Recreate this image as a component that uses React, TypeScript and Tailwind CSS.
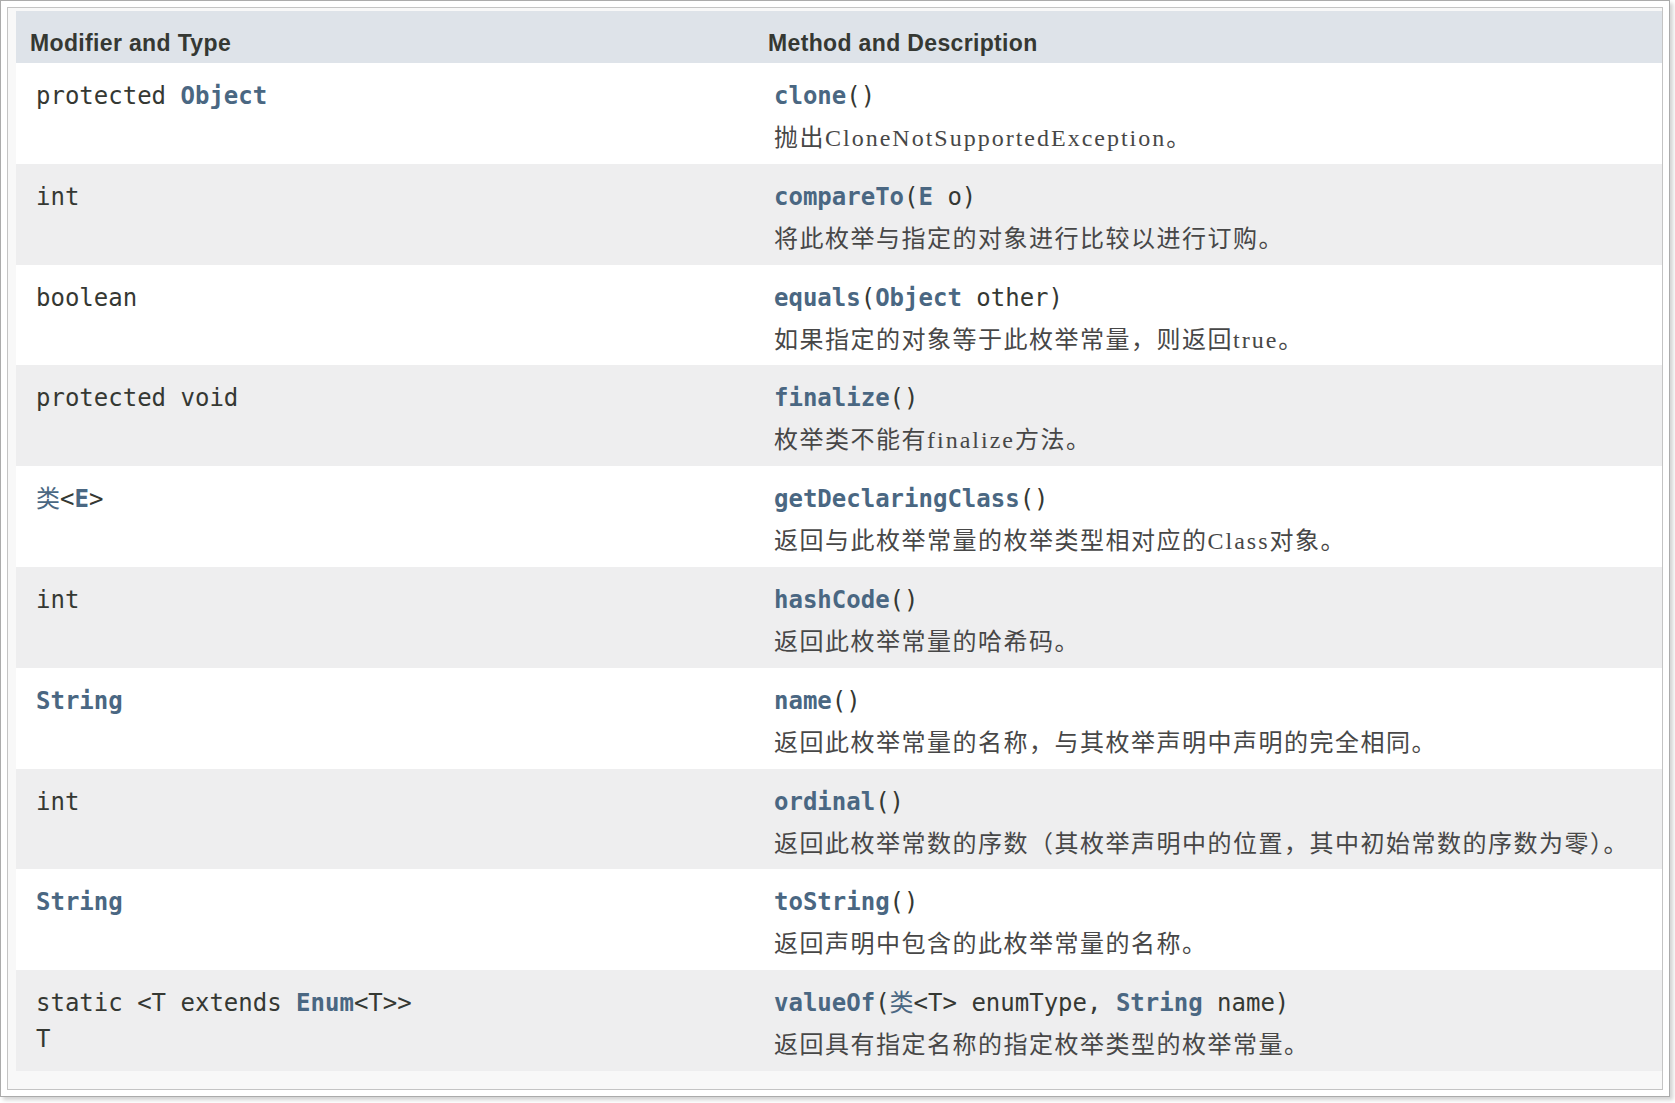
import type { ReactNode } from 'react';

const mono = "font-['DejaVu_Sans_Mono','Noto_Sans_CJK_SC',monospace]";

function L({ children, cjk }: { children: ReactNode; cjk?: boolean }) {
  return <span className={cjk ? 'text-[#4a6782]' : 'font-bold text-[#4a6782]'}>{children}</span>;
}

// latin runs in the description are set a little wider than the cjk text
function Desc({ text }: { text: string }) {
  return (
    <>
      {text.split(/([A-Za-z]+)/).map((part, i) =>
        i % 2 === 1 ? (
          <span key={i} className="tracking-[2px]">
            {part}
          </span>
        ) : (
          part
        )
      )}
    </>
  );
}

interface Row {
  type: ReactNode;
  method: ReactNode;
  desc: string;
}

const rows: Row[] = [
  {
    type: <>protected <L>Object</L></>,
    method: <><L>clone</L>()</>,
    desc: '抛出CloneNotSupportedException。',
  },
  {
    type: 'int',
    method: <><L>compareTo</L>(<L>E</L> o)</>,
    desc: '将此枚举与指定的对象进行比较以进行订购。',
  },
  {
    type: 'boolean',
    method: <><L>equals</L>(<L>Object</L> other)</>,
    desc: '如果指定的对象等于此枚举常量，则返回true。',
  },
  {
    type: 'protected void',
    method: <><L>finalize</L>()</>,
    desc: '枚举类不能有finalize方法。',
  },
  {
    type: <><L cjk>类</L>&lt;<L>E</L>&gt;</>,
    method: <><L>getDeclaringClass</L>()</>,
    desc: '返回与此枚举常量的枚举类型相对应的Class对象。',
  },
  {
    type: 'int',
    method: <><L>hashCode</L>()</>,
    desc: '返回此枚举常量的哈希码。',
  },
  {
    type: <L>String</L>,
    method: <><L>name</L>()</>,
    desc: '返回此枚举常量的名称，与其枚举声明中声明的完全相同。',
  },
  {
    type: 'int',
    method: <><L>ordinal</L>()</>,
    desc: '返回此枚举常数的序数（其枚举声明中的位置，其中初始常数的序数为零）。',
  },
  {
    type: <L>String</L>,
    method: <><L>toString</L>()</>,
    desc: '返回声明中包含的此枚举常量的名称。',
  },
  {
    type: <>static &lt;T extends <L>Enum</L>&lt;T&gt;&gt;<br />T</>,
    method: <><L>valueOf</L>(<L cjk>类</L>&lt;T&gt; enumType, <L>String</L> name)</>,
    desc: '返回具有指定名称的指定枚举类型的枚举常量。',
  },
];

export default function App() {
  return (
    <div className="min-h-screen bg-white">
      <div className="w-[1670px] border border-[#ababab] bg-white p-[6px] shadow-[3px_3px_4px_rgba(0,0,0,0.18)]">
        <div className="border border-[#c4c4c4] bg-[#f8f8f8] pl-2 pt-[3px] pb-[18px]">
          <div className="w-full">
            <div className="flex h-[52px] bg-[#dee3e9] font-['Liberation_Sans',Arial,sans-serif] text-[23px] font-bold leading-[27px] tracking-[0.35px] text-[#353833]">
              <div className="w-[738px] pl-[14px] pt-[19px]">Modifier and Type</div>
              <div className="flex-1 pl-[14px] pt-[19px]">Method and Description</div>
            </div>
            {rows.map((r, i) => (
              <div
                key={i}
                className={`flex h-[100.8px] ${i % 2 === 0 ? 'bg-white' : 'bg-[#eeeeef]'}`}
              >
                <div className={`w-[738px] pl-5 pt-[15px] ${mono} text-[24px] leading-[36px] text-[#353833]`}>
                  {r.type}
                </div>
                <div className="flex-1 pl-5 pt-[15px]">
                  <div className={`${mono} text-[24px] leading-[36px] text-[#353833]`}>{r.method}</div>
                  <div className="mt-[6px] font-['Liberation_Serif','Noto_Sans_CJK_SC',serif] text-[24px] leading-[36px] tracking-[1.5px] text-[#474747]">
                    <Desc text={r.desc} />
                  </div>
                </div>
              </div>
            ))}
          </div>
        </div>
      </div>
    </div>
  );
}
